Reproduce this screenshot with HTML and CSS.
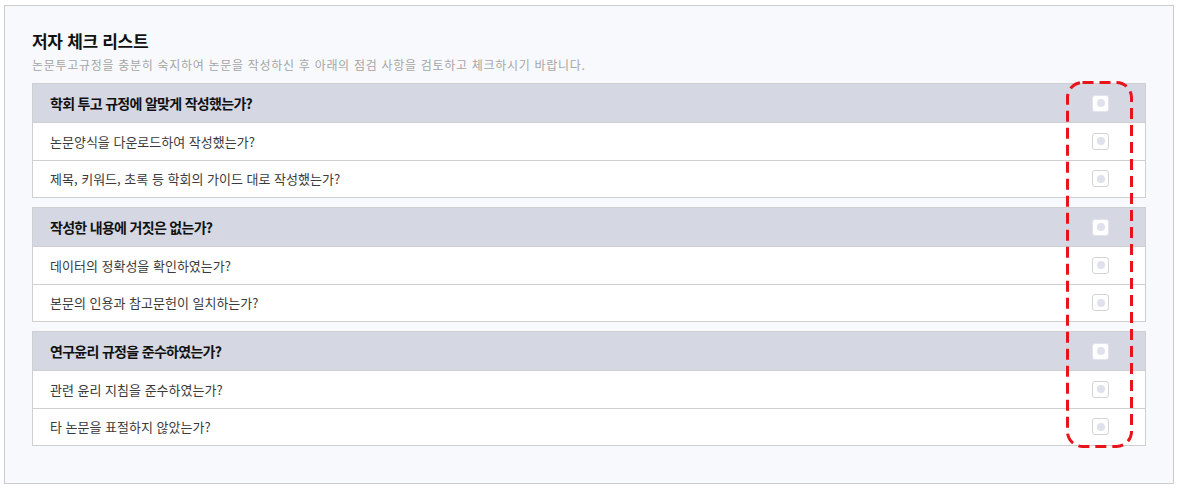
FILE: index.html
```html
<!DOCTYPE html>
<html lang="ko">
<head>
<meta charset="utf-8">
<title>저자 체크 리스트</title>
<link rel="stylesheet" href="styles.css">
</head>
<body>
<div class="panel">
  <h2 class="title">저자 체크 리스트</h2>
  <p class="desc">논문투고규정을 충분히 숙지하여 논문을 작성하신 후 아래의 점검 사항을 검토하고 체크하시기 바랍니다.</p>
  <div class="list">
    <div class="group">
      <div class="row head"><span>학회 투고 규정에 알맞게 작성했는가?</span><i class="chk"><b></b></i></div>
      <div class="row"><span>논문양식을 다운로드하여 작성했는가?</span><i class="chk"><b></b></i></div>
      <div class="row"><span>제목, 키워드, 초록 등 학회의 가이드 대로 작성했는가?</span><i class="chk"><b></b></i></div>
    </div>
    <div class="group">
      <div class="row head"><span>작성한 내용에 거짓은 없는가?</span><i class="chk"><b></b></i></div>
      <div class="row"><span>데이터의 정확성을 확인하였는가?</span><i class="chk"><b></b></i></div>
      <div class="row"><span>본문의 인용과 참고문헌이 일치하는가?</span><i class="chk"><b></b></i></div>
    </div>
    <div class="group">
      <div class="row head"><span>연구윤리 규정을 준수하였는가?</span><i class="chk"><b></b></i></div>
      <div class="row"><span>관련 윤리 지침을 준수하였는가?</span><i class="chk"><b></b></i></div>
      <div class="row"><span>타 논문을 표절하지 않았는가?</span><i class="chk"><b></b></i></div>
    </div>
    <svg class="mark" width="67" height="367" viewBox="0 0 67 367" aria-hidden="true">
      <rect x="1.5" y="1.5" width="64" height="364" rx="15" ry="15" fill="none" stroke="#e8141c" stroke-width="3" stroke-dasharray="11 6"/>
    </svg>
  </div>
</div>
</body>
</html>
```

FILE: styles.css
```css
html, body {
  margin: 0;
  padding: 0;
  background: #ffffff;
}
body {
  font-family: "Noto Sans CJK KR", "Noto Sans", sans-serif;
  color: #333;
}
.panel {
  box-sizing: border-box;
  margin: 5px 0 0 4px;
  width: 1170px;
  height: 479px;
  border: 1px solid #cccccc;
  background: #f8f9fc;
  padding: 24px 27px 0 27px;
}
.title {
  margin: 0;
  font-size: 17px;
  line-height: 22px;
  font-weight: 700;
  letter-spacing: -0.3px;
  color: #111;
}
.desc {
  margin: 4px 0 0 0;
  font-size: 12px;
  line-height: 17px;
  letter-spacing: 0.7px;
  color: #a5a5a5;
}
.list {
  position: relative;
  margin-top: 10px;
  display: flex;
  flex-direction: column;
  gap: 9px;
}
.group {
  border: 1px solid #cfcfcf;
  background: #ffffff;
  display: flex;
  flex-direction: column;
}
.row {
  display: flex;
  align-items: center;
  justify-content: space-between;
  height: 37.5px;
  box-sizing: border-box;
  padding: 0 36px 0 17px;
  border-top: 1px solid #cfcfcf;
  font-size: 13px;
  color: #3a3a3a;
}
.row.head {
  height: 38px;
  border-top: 0;
  background: #d5d7e3;
  font-size: 14px;
  font-weight: 700;
  letter-spacing: -0.7px;
  color: #111;
}
.chk {
  box-sizing: border-box;
  width: 17px;
  height: 17px;
  border: 1px solid #d4d4d8;
  border-radius: 3px;
  background: #fff;
  display: flex;
  align-items: center;
  justify-content: center;
}
.head .chk {
  border-color: #e2e4ec;
}
.chk b {
  width: 8px;
  height: 8px;
  border-radius: 50%;
  background: #dfe2ec;
}
.mark {
  position: absolute;
  left: 1034px;
  top: -2px;
}
```
